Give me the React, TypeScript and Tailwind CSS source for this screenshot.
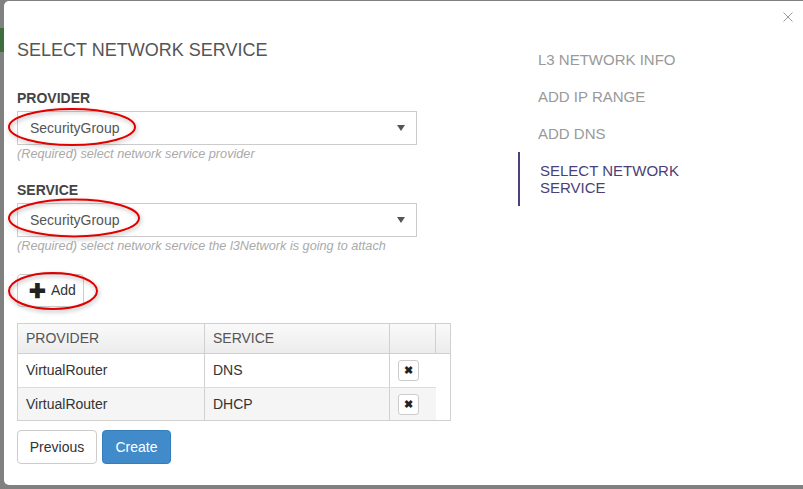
import React from 'react';

const steps = ['L3 NETWORK INFO', 'ADD IP RANGE', 'ADD DNS'];

const rows = [
  { provider: 'VirtualRouter', service: 'DNS' },
  { provider: 'VirtualRouter', service: 'DHCP' },
];

const Caret = () => (
  <span className="w-0 h-0 border-l-[4px] border-r-[4px] border-t-[6px] border-l-transparent border-r-transparent border-t-[#555]" />
);

const SelectBox = ({ value }: { value: string }) => (
  <div className="w-[400px] h-[34px] border border-[#ccc] bg-white flex items-center justify-between pl-[12px] pr-[11px] text-[14px] text-[#555]">
    <span>{value}</span>
    <Caret />
  </div>
);

export default function App() {
  return (
    <div
      className="relative w-[803px] h-[489px] overflow-hidden bg-[#808080]"
      style={{ fontFamily: '"Liberation Sans", Arial, sans-serif' }}
    >
      {/* bits of the page behind the overlay */}
      <div className="absolute left-0 top-[28px] w-[4px] h-[24px] bg-[#3d6e3d]" />

      <div className="ml-[4px] mt-[1px] w-[830px] h-[484px] bg-white rounded-[5px] flex relative">
        {/* left: form */}
        <div className="w-[500px] pl-[13px] pt-[38px]">
          <h2 className="text-[18px] leading-[22px] text-[#555]">SELECT NETWORK SERVICE</h2>

          <div className="mt-[27px]">
            <div className="text-[14px] leading-[20px] font-bold text-[#444] mb-[3px]">PROVIDER</div>
            <SelectBox value="SecurityGroup" />
            <div className="mt-[1px] text-[12.7px] leading-[17px] italic text-[#aaa]">
              (Required) select network service provider
            </div>
          </div>

          <div className="mt-[17px]">
            <div className="text-[14px] leading-[20px] font-bold text-[#444] mb-[3px]">SERVICE</div>
            <SelectBox value="SecurityGroup" />
            <div className="mt-[1px] text-[12.7px] leading-[17px] italic text-[#aaa]">
              (Required) select network service the l3Network is going to attach
            </div>
          </div>

          <button className="mt-[19px] w-[67px] h-[33px] border border-[#ccc] rounded-[4px] bg-white flex items-center pl-[11px] gap-[5px] text-[14px] text-[#333]">
            <span className="text-[20px] leading-none font-bold text-[#222]">✚</span>
            <span>Add</span>
          </button>

          <div className="mt-[16px] w-[434px] border border-[#d0d0d0] text-[14px]">
            <div className="flex h-[30px] bg-gradient-to-b from-[#fafafa] to-[#ececec] border-b border-[#d0d0d0] text-[#555]">
              <div className="w-[187px] border-r border-[#d0d0d0] pl-[8px] flex items-center">PROVIDER</div>
              <div className="w-[185px] border-r border-[#d0d0d0] pl-[8px] flex items-center">SERVICE</div>
              <div className="w-[46px] border-r border-[#d0d0d0]" />
              <div className="flex-1" />
            </div>
            {rows.map((r, i) => (
              <div key={r.service} className="flex h-[33px] text-[#333]">
                <div className={`w-[418px] flex ${i === 1 ? 'bg-[#f5f5f5] border-t border-[#ddd]' : ''}`}>
                  <div className="w-[187px] border-r border-[#d0d0d0] pl-[8px] flex items-center">{r.provider}</div>
                  <div className="w-[185px] border-r border-[#d0d0d0] pl-[8px] flex items-center">{r.service}</div>
                  <div className="w-[46px] flex items-center pl-[8px]">
                    <span className="w-[21px] h-[21px] border border-[#ccc] rounded-[3px] bg-white flex items-center justify-center text-[11px] font-bold text-[#222]">
                      ✖
                    </span>
                  </div>
                </div>
              </div>
            ))}
          </div>

          <div className="mt-[9px] flex gap-[5px]">
            <button className="w-[80px] h-[34px] border border-[#ccc] rounded-[4px] bg-white text-[14px] text-[#333]">
              Previous
            </button>
            <button className="w-[69px] h-[34px] border border-[#357ebd] rounded-[4px] bg-[#428bca] text-[14px] text-white">
              Create
            </button>
          </div>
        </div>

        {/* right: steps */}
        <div className="w-[190px] ml-[14px] pt-[49px] flex flex-col">
          {steps.map((s) => (
            <div key={s} className="pl-[20px] text-[15px] leading-[20px] text-[#999] mb-[17px]">
              {s}
            </div>
          ))}
          <div className="-mt-[9px] border-l-[2px] border-[#4f3f7f] pl-[20px] py-[10px] w-[175px] text-[15px] leading-[17px] text-[#4a3f78]">
            SELECT NETWORK SERVICE
          </div>
        </div>

        <svg className="absolute left-[779px] top-[11px]" width="10" height="10" viewBox="0 0 10 10">
          <path d="M0.5 0.5 L9.5 9.5 M9.5 0.5 L0.5 9.5" stroke="#9a9a9a" strokeWidth="1" fill="none" />
        </svg>
      </div>

      {/* red annotation rings */}
      <svg className="absolute left-0 top-0 pointer-events-none" width="803" height="489">
        <defs>
          <filter id="sh" x="-20%" y="-40%" width="140%" height="180%">
            <feDropShadow dx="1" dy="2" stdDeviation="2" floodColor="#000" floodOpacity="0.3" />
          </filter>
        </defs>
        <g fill="none" stroke="#e10000" strokeWidth="2" filter="url(#sh)">
          <ellipse cx="72" cy="127" rx="63" ry="18" />
          <ellipse cx="74" cy="218" rx="65" ry="18.5" />
          <ellipse cx="53" cy="291" rx="44" ry="18" />
        </g>
      </svg>
    </div>
  );
}
